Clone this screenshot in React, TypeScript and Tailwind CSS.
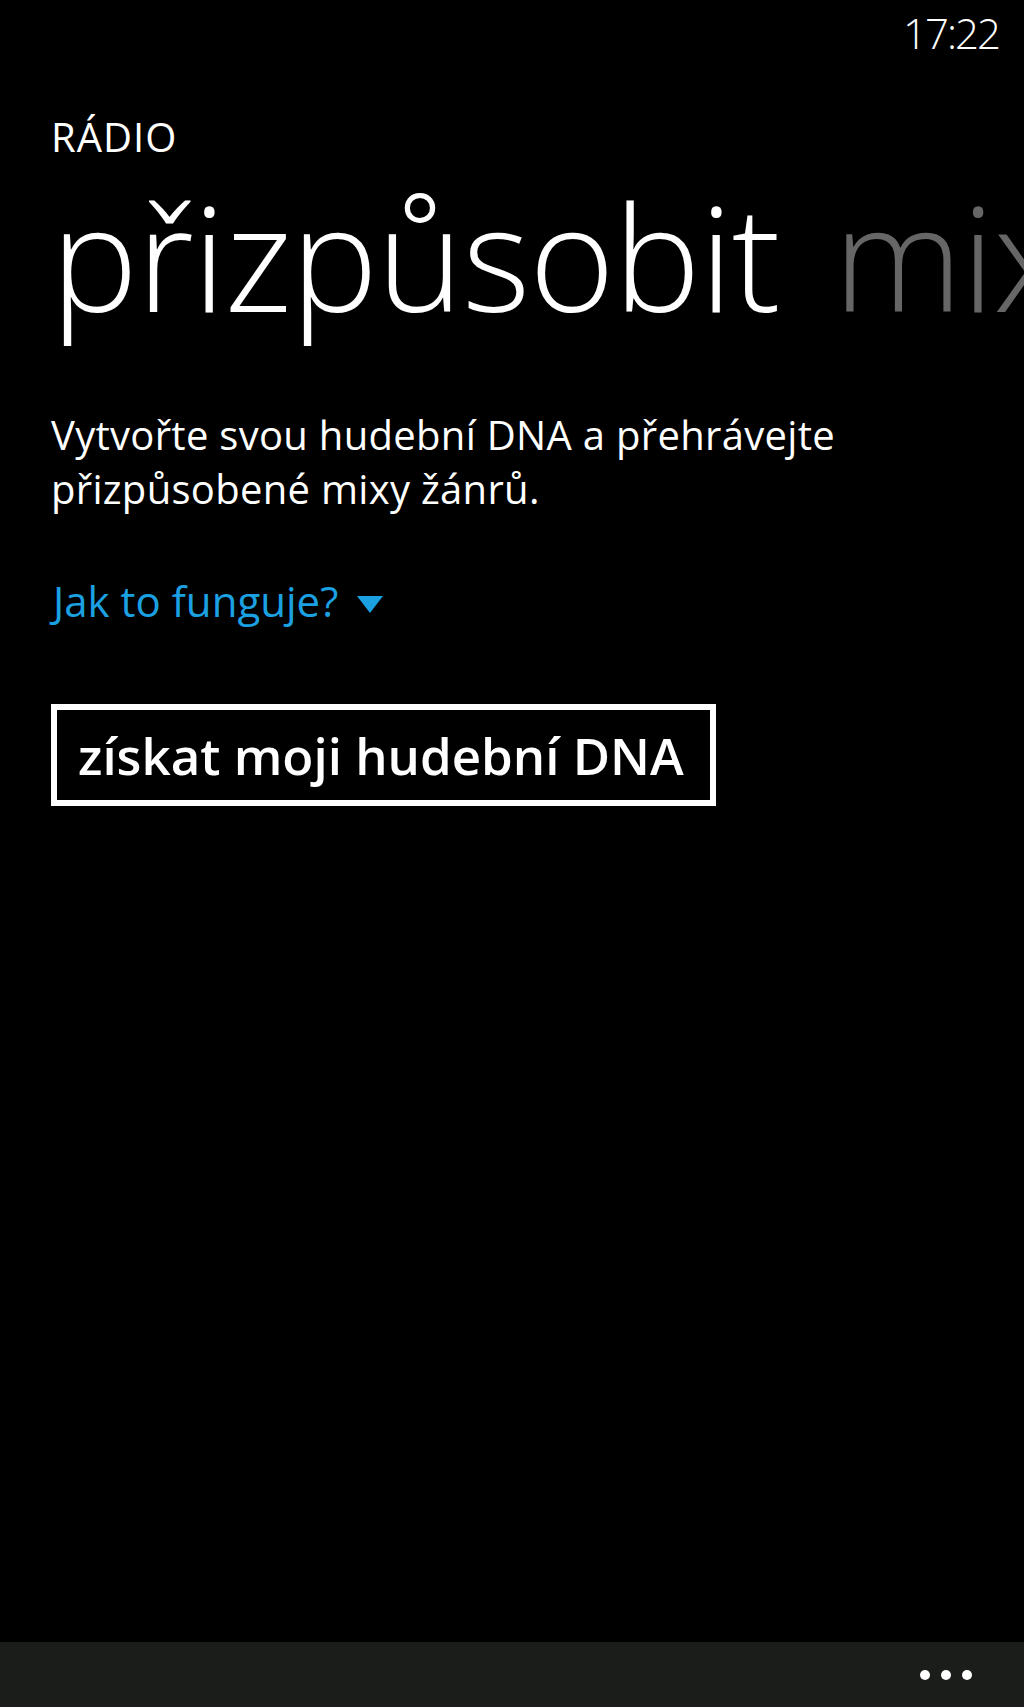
export default function App() {
  const font = { fontFamily: '"Open Sans", "Noto Sans", sans-serif' };

  return (
    <div
      className="flex h-[1707px] w-full flex-col overflow-hidden bg-black text-white"
      style={font}
    >
      {/* Status bar */}
      <div className="flex justify-end pr-[25px] pt-[12px]">
        <span className="text-[42px] font-light leading-[42px] tracking-[-2px]">17:22</span>
      </div>

      {/* Pivot */}
      <div className="flex flex-col pl-[51px]">
        <div className="mt-[63px] text-[40px] leading-[40px] tracking-[1px]">RÁDIO</div>

        <div className="mt-[26px] flex gap-[54px] whitespace-nowrap text-[146px] font-light leading-[146px] tracking-[-1px]">
          <span>přizpůsobit</span>
          <span className="text-[#666666]">mixy</span>
        </div>

        <p className="mt-[79px] text-[40px] leading-[54px] tracking-[0.3px]">
          Vytvořte svou hudební DNA a přehrávejte
          <br />
          přizpůsobené mixy žánrů.
        </p>

        <button className="ml-[2px] mt-[58px] flex items-center gap-[19px] self-start text-[42px] leading-[54px] text-[#1ba1e2]">
          Jak to funguje?
          <svg width="26" height="17" viewBox="0 0 26 17" className="mt-[6px]">
            <polygon points="0,0 26,0 13,17" fill="#1ba1e2" />
          </svg>
        </button>

        <button className="mt-[76px] flex h-[102px] w-[665px] items-center border-[6px] border-white pl-[21px] text-[51px] font-semibold leading-[60px]">
          získat moji hudební DNA
        </button>
      </div>

      {/* App bar */}
      <div className="mt-auto flex h-[65px] items-center justify-end gap-[11px] bg-[#1b1d1b] pr-[52px]">
        <span className="h-[10px] w-[10px] rounded-full bg-white" />
        <span className="h-[10px] w-[10px] rounded-full bg-white" />
        <span className="h-[10px] w-[10px] rounded-full bg-white" />
      </div>
    </div>
  );
}
